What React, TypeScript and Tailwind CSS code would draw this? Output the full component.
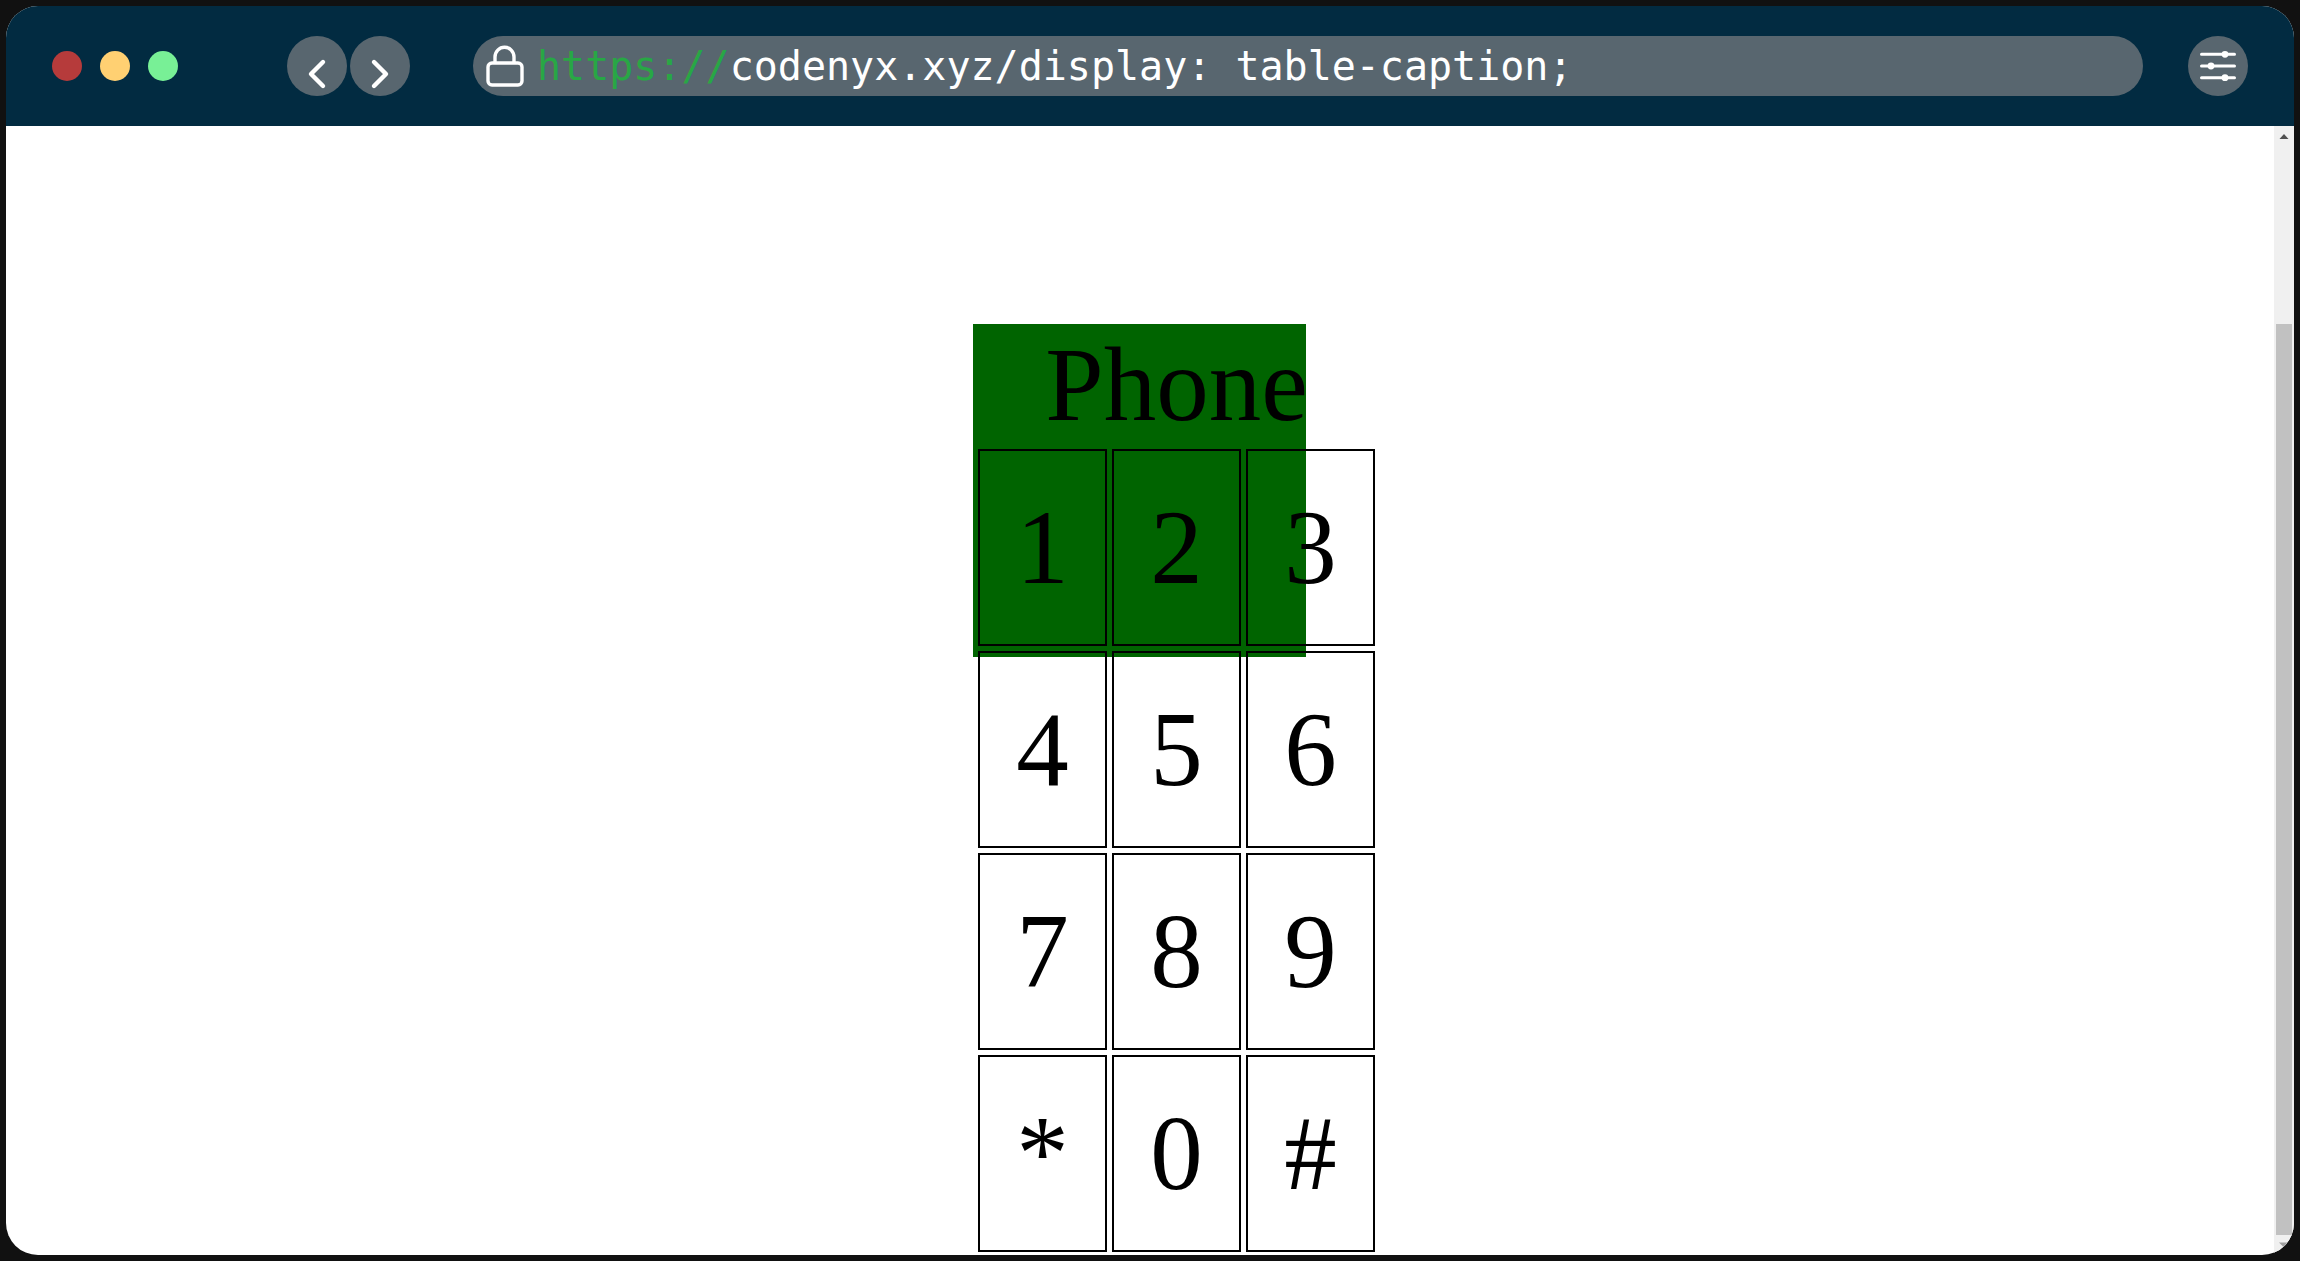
import React from "react";

const rows = [
  ["1", "2", "3"],
  ["4", "5", "6"],
  ["7", "8", "9"],
  ["*", "0", "#"],
];

function Chevron({ d }: { d: string }) {
  return (
    <svg viewBox="0 0 60 60" className="size-full" fill="none" stroke="#fff" strokeWidth="4.4" strokeLinecap="round" strokeLinejoin="round" aria-hidden="true">
      <path d={d} />
    </svg>
  );
}

function Toolbar() {
  return (
    <header className="flex h-[120px] shrink-0 items-center bg-[#022b41] pr-[46px] pl-[46px]">
      <div className="flex gap-[18px]">
        <button aria-label="Close" className="size-[30px] rounded-full bg-[#b63b3b]" />
        <button aria-label="Minimize" className="size-[30px] rounded-full bg-[#ffd072]" />
        <button aria-label="Maximize" className="size-[30px] rounded-full bg-[#78f096]" />
      </div>
      <nav className="ml-[109px] flex gap-[3px]">
        <button aria-label="Back" className="size-[60px] rounded-full bg-[#58666f]">
          <Chevron d="M36 26 L24 38 L36 50" />
        </button>
        <button aria-label="Forward" className="size-[60px] rounded-full bg-[#58666f]">
          <Chevron d="M24 26 L36 38 L24 50" />
        </button>
      </nav>
      <div className="ml-[63px] flex h-[60px] min-w-0 flex-1 items-center rounded-full bg-[#58666f] pl-[13px] font-['DejaVu_Sans_Mono',monospace] text-[40px] leading-[60px] whitespace-pre text-white">
        <svg viewBox="0 0 38 42" className="mr-[13px] h-[42px] w-[38px] shrink-0" fill="none" stroke="#fff" strokeWidth="3.4" aria-hidden="true">
          <rect x="2" y="18" width="34" height="22" rx="4" />
          <path d="M9 18 V12 a9.5 9.8 0 0 1 19 0 V18" />
        </svg>
        <span className="text-[#28a745]">https://</span>
        <span>codenyx.xyz/display: table-caption;</span>
      </div>
      <button aria-label="Settings" className="ml-[45px] size-[60px] rounded-full bg-[#58666f]">
        <svg viewBox="0 0 60 60" className="size-full" fill="#fff" stroke="#fff" strokeWidth="3" strokeLinecap="round" aria-hidden="true">
          <path d="M13.5 18.3H46.5M13.5 30H46.5M13.5 41.7H46.5" />
          <g stroke="none">
            <circle cx="37" cy="18.3" r="3.4" />
            <circle cx="23" cy="30" r="3.4" />
            <circle cx="37" cy="41.7" r="3.4" />
          </g>
        </svg>
      </button>
    </header>
  );
}

function ScrollBar() {
  return (
    <div className="flex w-5 shrink-0 flex-col items-center bg-[#f0f0f0]" aria-hidden="true">
      <svg viewBox="0 0 20 20" className="size-5" fill="#505050">
        <path d="M5.500 13 L10 8 L14.500 13Z" />
      </svg>
      <div className="mt-[178px] w-4 flex-1 bg-[#c1c1c1]" />
      <svg viewBox="0 0 20 20" className="size-5" fill="#a0a0a0">
        <path d="M5 7.500 L10 12.500 L15 7.500Z" />
      </svg>
    </div>
  );
}

export default function App() {
  return (
    <div className="h-screen bg-[#111] p-1.5">
      <div className="flex h-full flex-col overflow-hidden rounded-[32px] bg-white">
        <Toolbar />
        <div className="flex min-h-0 flex-1">
          <main className="flex min-w-0 flex-1 justify-center overflow-hidden pt-[198px] pl-[73px]">
            <div className="relative h-fit font-['Liberation_Serif',serif] text-[105px] leading-[122px] text-black">
              <div className="absolute top-0 left-0 size-[333px] bg-[#006400]" />
              <table className="relative border-separate border-spacing-[5px]">
                <caption className="h-[120px] text-center">Phone</caption>
                <tbody>
                  {rows.map((row) => (
                    <tr key={row[0]}>
                      {row.map((key) => (
                        <td key={key} className="h-[197px] w-[129px] border-2 border-black p-0 text-center align-middle">
                          {key}
                        </td>
                      ))}
                    </tr>
                  ))}
                </tbody>
              </table>
            </div>
          </main>
          <ScrollBar />
        </div>
      </div>
    </div>
  );
}
